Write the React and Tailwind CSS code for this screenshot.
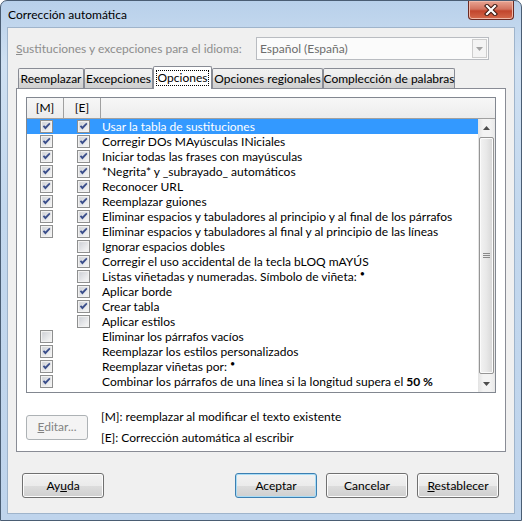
import React from 'react'

const font = { fontFamily: 'Lato, "Noto Sans", sans-serif' }

const rows = [
  { m: true, e: true, text: 'Usar la tabla de sustituciones', selected: true },
  { m: true, e: true, text: 'Corregir DOs MAyúsculas INiciales' },
  { m: true, e: true, text: 'Iniciar todas las frases con mayúsculas' },
  { m: true, e: true, text: '*Negrita* y _subrayado_ automáticos' },
  { m: true, e: true, text: 'Reconocer URL' },
  { m: true, e: true, text: 'Reemplazar guiones' },
  { m: true, e: true, text: 'Eliminar espacios y tabuladores al principio y al final de los párrafos' },
  { m: true, e: true, text: 'Eliminar espacios y tabuladores al final y al principio de las líneas' },
  { m: null, e: false, text: 'Ignorar espacios dobles' },
  { m: null, e: true, text: 'Corregir el uso accidental de la tecla bLOQ mAYÚS' },
  { m: null, e: false, text: 'Listas viñetadas y numeradas. Símbolo de viñeta:', bullet: true },
  { m: null, e: true, text: 'Aplicar borde' },
  { m: null, e: true, text: 'Crear tabla' },
  { m: null, e: false, text: 'Aplicar estilos' },
  { m: false, e: null, text: 'Eliminar los párrafos vacíos' },
  { m: true, e: null, text: 'Reemplazar los estilos personalizados' },
  { m: true, e: null, text: 'Reemplazar viñetas por:', bullet: true },
  { m: true, e: null, text: 'Combinar los párrafos de una línea si la longitud supera el', bold: '50 %' },
]

function Checkbox({ checked }) {
  return (
    <svg width="13" height="13" viewBox="0 0 13 13" className="block">
      <defs>
        <linearGradient id="cbfill" x1="0" y1="0" x2="1" y2="1">
          <stop offset="0" stopColor="#cdd0d6" />
          <stop offset="1" stopColor="#f7f7f7" />
        </linearGradient>
      </defs>
      <rect x="0.5" y="0.5" width="12" height="12" fill="#f4f4f4" stroke="#8e8f8f" />
      <rect x="2" y="2" width="9" height="9" fill="url(#cbfill)" stroke="#e8e8e8" strokeWidth="0.5" />
      {checked && <polygon points="2.8,6.4 4.1,5.2 5.4,6.6 9.3,2.7 10.4,4 5.4,9.6" fill="#3b4f8c" />}
    </svg>
  )
}

function Bullet() {
  return <span className="ml-[3px] inline-block align-top text-[9px] leading-[9px]">•</span>
}

function Button({ children, primary, disabled, className = '' }) {
  let look = 'border-[#707070] bg-[linear-gradient(#f2f2f2,#ebebeb_50%,#dddddd_50%,#cfcfcf)] shadow-[inset_0_0_0_1px_#fcfcfc] text-black'
  if (primary) look = 'border-[#3c7fb1] bg-[linear-gradient(#f2f2f2,#ebebeb_50%,#dddddd_50%,#cfcfcf)] shadow-[inset_0_0_0_1px_#a8dcf6] text-black'
  if (disabled) look = 'border-[#adb2b5] bg-[#f4f4f4] text-[#838383]'
  return (
    <div className={`flex h-[25px] items-center justify-center rounded-[3px] border text-[12px] ${look} ${className}`}>
      {children}
    </div>
  )
}

function Tab({ label, width, selected }) {
  if (selected) {
    return (
      <div
        className="relative z-10 -mb-px flex h-[23px] items-center justify-center whitespace-nowrap rounded-t-[2px] border border-b-0 border-[#898c95] bg-white"
        style={{ width }}
      >
        <span className="border border-dotted border-black px-[1px] leading-[14px]">{label}</span>
      </div>
    )
  }
  return (
    <div
      className="flex h-[20px] items-center justify-center whitespace-nowrap rounded-t-[2px] border border-b-0 border-[#898c95] bg-[linear-gradient(#f2f2f2,#ebebeb_50%,#dddddd_50%,#cfcfcf)]"
      style={{ width }}
    >
      {label}
    </div>
  )
}

function Scrollbar() {
  return (
    <div className="flex w-[17px] flex-col bg-[linear-gradient(90deg,#e3e3e3,#f3f3f3_30%,#f3f3f3_70%,#e8e8e8)]">
      <div className="flex h-[17px] items-center justify-center">
        <svg width="7" height="4" viewBox="0 0 7 4"><polygon points="0,4 3.5,0 7,4" fill="#4d4d4d" /></svg>
      </div>
      <div className="mx-[1px] my-[1px] flex flex-1 items-center justify-center rounded-[2px] border border-[#959595] bg-[linear-gradient(90deg,#f3f3f3,#e8e8e8_50%,#d6d6d6)] shadow-[inset_0_0_0_1px_#fbfbfb]">
        <div className="flex w-[7px] flex-col gap-[1px]">
          <div className="h-px bg-[#8a8a8a]" />
          <div className="h-px bg-[#8a8a8a]" />
          <div className="h-px bg-[#8a8a8a]" />
        </div>
      </div>
      <div className="flex h-[17px] items-center justify-center">
        <svg width="7" height="4" viewBox="0 0 7 4"><polygon points="0,0 7,0 3.5,4" fill="#4d4d4d" /></svg>
      </div>
    </div>
  )
}

export default function App() {
  return (
    <div className="h-[521px] w-[522px] bg-white text-[12px] text-black" style={font}>
      <div className="flex h-[521px] w-[522px] flex-col rounded-t-[7px] border border-[#4a5d73] bg-[linear-gradient(180deg,#b8d0ea,#cfe0f2_12%,#c3d8ee_40%,#bfd4ec)]">
        <div className="flex h-[26px] items-start justify-between pl-[7px] pr-[7px]">
          <span className="pt-[6px] text-[12px] leading-[16px]">Corrección automática</span>
          <div className="flex h-[19px] w-[46px] items-center justify-center rounded-b-[4px] border border-t-0 border-[#6b2a22] bg-[linear-gradient(#e8a593,#d2735f_45%,#c2452d_55%,#d46a4c)] shadow-[inset_0_0_0_1px_#f0b8a8]">
            <svg width="14" height="12" viewBox="0 0 14 12">
              <path d="M3 2 L11 10 M11 2 L3 10" stroke="#3c1810" strokeWidth="4.2" strokeLinecap="square" />
              <path d="M3 2 L11 10 M11 2 L3 10" stroke="#ffffff" strokeWidth="2.2" strokeLinecap="square" />
            </svg>
          </div>
        </div>

        <div className="mb-[6px] ml-[6px] mr-[6px] flex flex-1 flex-col border border-[#9fb4cb] bg-[#f0f0f0] px-[8px]">
          <div className="mt-[9px] flex h-[23px] items-center">
            <span className="text-[#8d8d8d]">
              <span className="underline">S</span>ustituciones y excepciones para el idioma:
            </span>
            <div className="ml-auto mr-[17px] flex h-[23px] w-[233px] items-center border border-[#b9bcc1] bg-[#fbfbfb] pl-[3px]">
              <span className="flex-1 text-[#6d6d6d]">Español (España)</span>
              <div className="mr-[1px] flex h-[19px] w-[15px] items-center justify-center border border-[#cdcdcd] bg-[#f4f4f4]">
                <svg width="7" height="4" viewBox="0 0 7 4"><polygon points="0,0 7,0 3.5,4" fill="#a3a3a3" /></svg>
              </div>
            </div>
          </div>

          <div className="mt-[6px] flex h-[22px] items-end pl-[2px]">
            <Tab label="Reemplazar" width={66} />
            <Tab label="Excepciones" width={69} />
            <Tab label="Opciones" width={59} selected />
            <Tab label="Opciones regionales" width={111} />
            <Tab label="Complección de palabras" width={132} />
          </div>

          <div className="flex h-[364px] flex-col border border-[#898c95] bg-white px-[9px] pt-[8px]">
            <div className="flex h-[296px] flex-col border border-[#828790] bg-white">
              <div className="flex h-[21px] border-b border-[#a0a0a0] bg-[linear-gradient(#f7f7f7,#ececec)]">
                <div className="flex w-[37px] items-center justify-center border-r border-[#a0a0a0]">[M]</div>
                <div className="flex w-[37px] items-center justify-center border-r border-[#a0a0a0]">[E]</div>
                <div className="flex-1" />
              </div>
              <div className="flex flex-1">
                <div className="flex-1">
                  {rows.map((r, i) => (
                    <div
                      key={i}
                      className={`flex h-[15px] items-center ${r.selected ? 'bg-[#3399ff] text-white' : ''}`}
                    >
                      <div className="w-[37px] pl-[13px]">{r.m !== null && <Checkbox checked={r.m} />}</div>
                      <div className="w-[37px] pl-[13px]">{r.e !== null && <Checkbox checked={r.e} />}</div>
                      <span className="whitespace-nowrap pl-[1px] leading-[15px]">
                        {r.text}
                        {r.bullet && <Bullet />}
                        {r.bold && <b className="ml-[3px] font-bold">{r.bold}</b>}
                      </span>
                    </div>
                  ))}
                </div>
                <Scrollbar />
              </div>
            </div>

            <div className="mt-[16px] flex items-center gap-[13px]">
              <Button disabled className="w-[62px]">
                <span><span className="underline">E</span>ditar...</span>
              </Button>
              <div className="flex flex-col gap-[6px] leading-[15px]">
                <span>[M]: reemplazar al modificar el texto existente</span>
                <span>[E]: Corrección automática al escribir</span>
              </div>
            </div>
          </div>

          <div className="mt-[21px] flex items-center">
            <Button className="ml-[6px] w-[82px]">
              <span>Ay<span className="underline">u</span>da</span>
            </Button>
            <div className="ml-auto mr-[7px] flex gap-[9px]">
              <Button primary className="w-[82px]">Aceptar</Button>
              <Button className="w-[82px]">Cancelar</Button>
              <Button className="w-[82px]">
                <span><span className="underline">R</span>establecer</span>
              </Button>
            </div>
          </div>
        </div>
      </div>
    </div>
  )
}
